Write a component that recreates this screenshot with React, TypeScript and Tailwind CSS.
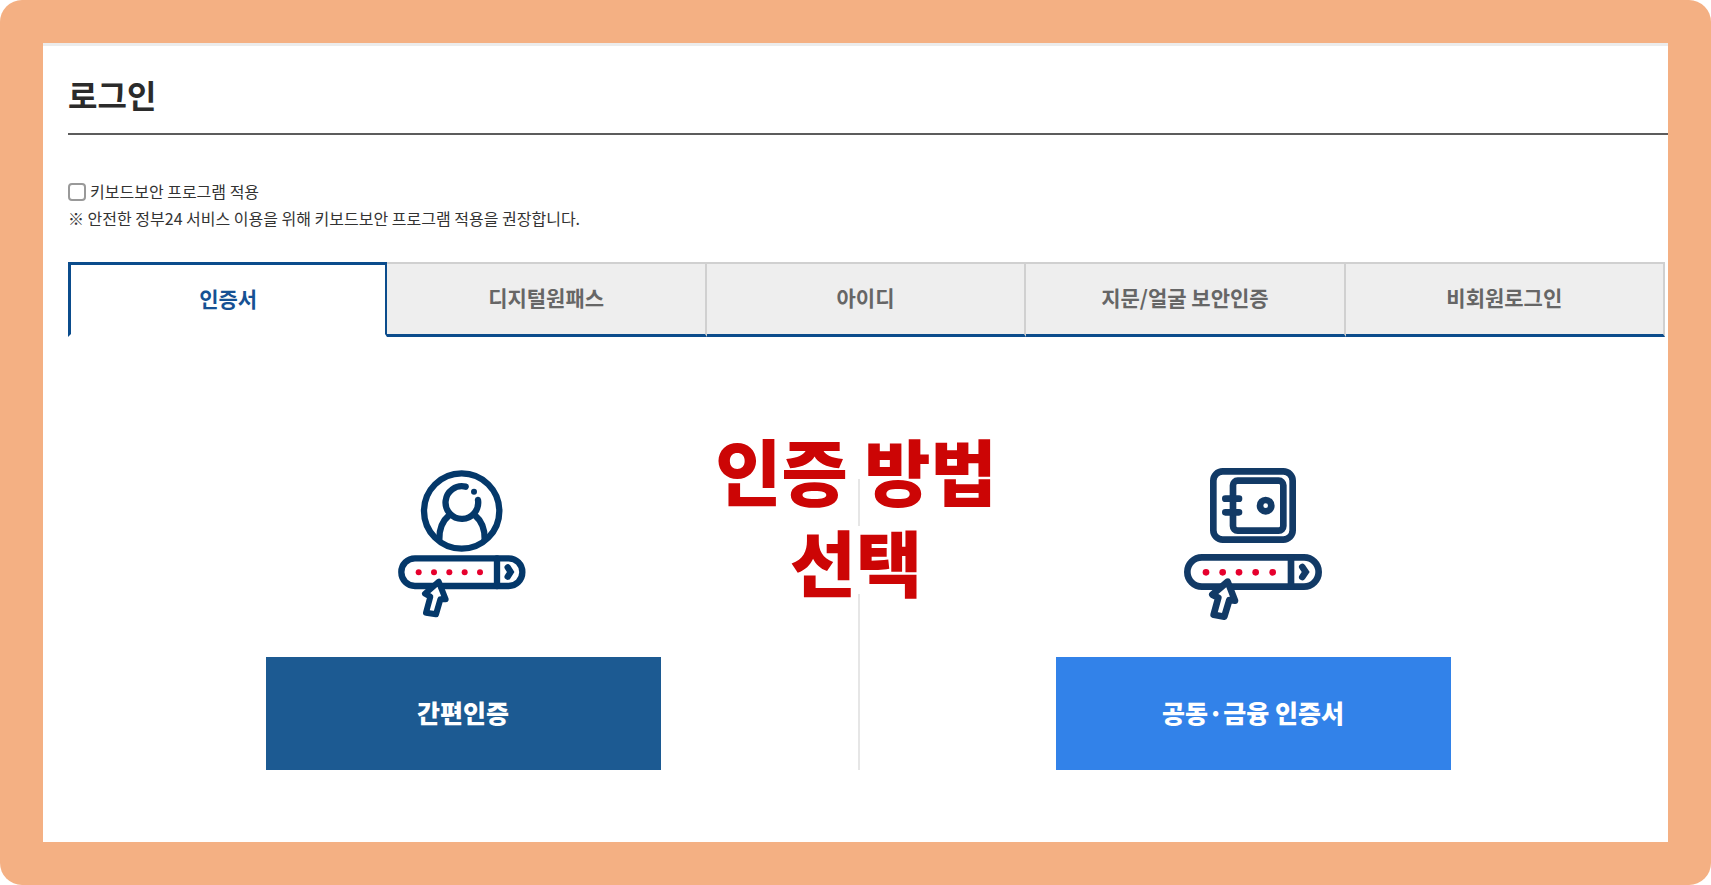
import { useState } from 'react';

const tabs = ['인증서', '디지털원패스', '아이디', '지문/얼굴 보안인증', '비회원로그인'];

const ProfileIcon = () => (
    <svg viewBox="39 51 420 462" fill="none" className="h-[154px] w-[140px] text-[#04386a]" aria-hidden="true">
        <g stroke="currentColor" strokeWidth="19" strokeLinecap="round">
            <circle cx="245" cy="183" r="113" />
            <path d="M257 110 A49 49 0 1 0 294 150" />
            <path d="M208 195 Q177 221 178 268 M284 195 Q315 221 314 268" />
            <rect x="64" y="325" width="363" height="83" rx="41" />
            <path d="M351 325 V408" />
            <path d="M383 352 L392 366 L383 380" />
        </g>
        <circle cx="282" cy="125" r="9" fill="currentColor" />
        <g fill="#e6002d">
            <circle cx="116" cy="367" r="9" />
            <circle cx="162" cy="367" r="9" />
            <circle cx="208" cy="367" r="9" />
            <circle cx="254" cy="367" r="9" />
            <circle cx="300" cy="367" r="9" />
        </g>
        <path
            d="M176 395 L135 431 L151 440 L138 488 L168 493 L181 448 L197 448 Z"
            fill="#fff"
            stroke="currentColor"
            strokeWidth="18"
            strokeLinejoin="round"
        />
    </svg>
);

const SafeIcon = () => (
    <svg viewBox="42 51 420 462" fill="none" className="h-[154px] w-[140px] text-[#123a66]" aria-hidden="true">
        <g stroke="currentColor" strokeWidth="20" strokeLinecap="round">
            <rect x="133" y="64" width="238" height="205" rx="28" />
            <rect x="192" y="92" width="151" height="150" rx="14" />
            <path d="M169 146 H210 M169 187 H210" />
            <circle cx="290" cy="167" r="17" />
            <rect x="55" y="322" width="394" height="88" rx="44" />
            <path d="M366 322 V410" />
            <path d="M400 351 L410 366 L400 381" />
        </g>
        <g fill="#e6002d">
            <circle cx="111" cy="367" r="10" />
            <circle cx="161" cy="367" r="10" />
            <circle cx="210" cy="367" r="10" />
            <circle cx="260" cy="367" r="10" />
            <circle cx="311" cy="367" r="10" />
        </g>
        <path
            d="M176 395 L130 434 L148 443 L134 494 L166 500 L181 450 L198 452 Z"
            fill="#fff"
            stroke="currentColor"
            strokeWidth="20"
            strokeLinejoin="round"
        />
    </svg>
);

const App = () => {
    const [activeTab, setActiveTab] = useState(0);
    const [keyboardSecurity, setKeyboardSecurity] = useState(false);

    return (
        <div className="flex min-h-screen flex-col rounded-[22px] bg-[#f4b083] p-[43px] font-['Noto_Sans_CJK_KR',sans-serif]">
            <main className="grow border-t-3 border-[#ececec] bg-white pl-[25px]">
                <header className="border-b-2 border-[#5c5c5c] pt-7 pb-[19px]">
                    <h1 className="text-[32px] leading-10 font-bold text-[#2b2b2b]">로그인</h1>
                </header>

                {/* Keyboard security */}
                <div className="pt-[43px] text-base leading-[27px] text-[#333]">
                    <div className="flex items-center gap-1">
                        <input
                            id="keyboard_security"
                            type="checkbox"
                            checked={keyboardSecurity}
                            onChange={(e) => setKeyboardSecurity(e.target.checked)}
                            className="size-[18px] appearance-none rounded-[4px] border-2 border-[#999] bg-white checked:bg-[#0b4c8c]"
                        />
                        <label htmlFor="keyboard_security">키보드보안 프로그램 적용</label>
                    </div>
                    <p>※ 안전한 정부24 서비스 이용을 위해 키보드보안 프로그램 적용을 권장합니다.</p>
                </div>

                {/* Tabs */}
                <div role="tablist" className="mt-[30px] mr-[3px] grid grid-cols-5">
                    {tabs.map((tab, index) => (
                        <button
                            key={tab}
                            type="button"
                            role="tab"
                            aria-selected={activeTab === index}
                            onClick={() => setActiveTab(index)}
                            className={
                                activeTab === index
                                    ? 'h-[75px] border-t-3 border-r-2 border-b-3 border-l-3 border-[#0b4c8c] border-b-white bg-white pb-0.5 text-[21px] font-bold text-[#165193]'
                                    : 'h-[75px] border-t-2 border-r-2 border-b-3 border-t-[#d0d0d0] border-r-[#d0d0d0] border-b-[#0b4c8c] bg-[#eee] pb-0.5 text-[21px] font-bold text-[#666]'
                            }
                        >
                            {tab}
                        </button>
                    ))}
                </div>

                {/* Certification methods */}
                <section className="relative mr-5 grid grid-cols-2 pt-[130px] pb-[72px]">
                    <div className="flex flex-col items-center gap-9">
                        <ProfileIcon />
                        <button type="button" className="h-[113px] w-1/2 bg-[#1c5a92] pb-0.5 text-[25px] font-black text-white">
                            간편인증
                        </button>
                    </div>
                    <div className="flex flex-col items-center gap-9">
                        <SafeIcon />
                        <button type="button" className="h-[113px] w-1/2 bg-[#3282e9] pb-0.5 text-[25px] font-black text-white">
                            공동·금융 인증서
                        </button>
                    </div>
                    <div className="absolute top-[142px] bottom-[72px] left-1/2 w-0.5 bg-[#e6e6e6]" />
                    <h2 className="absolute inset-x-0 top-[87px] flex flex-col items-center gap-3 pr-1 text-[72px] leading-[90px] font-black text-[#cc0505]">
                        <span>인증 방법</span>
                        <span className="bg-white leading-[68px]">선택</span>
                    </h2>
                </section>
            </main>
        </div>
    );
};

export default App;
